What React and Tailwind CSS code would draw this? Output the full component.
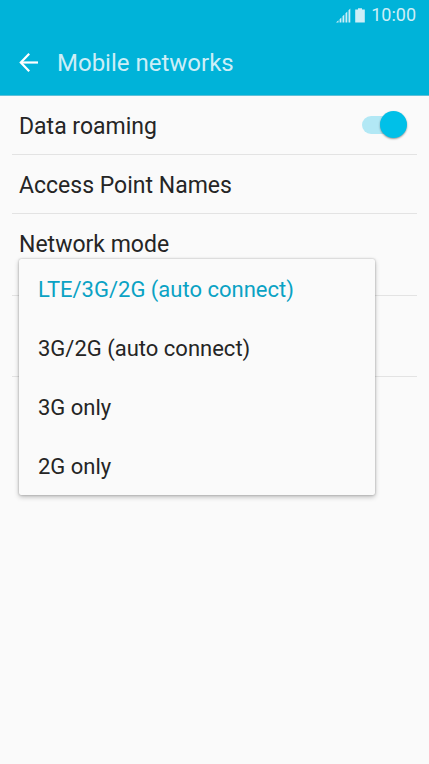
import React, { useState } from 'react';

const NETWORK_MODES = [
  'LTE/3G/2G (auto connect)',
  '3G/2G (auto connect)',
  '3G only',
  '2G only',
];

const SignalIcon = () => (
  <svg className="w-[15px] h-[15px]" viewBox="0 0 15 15" fill="currentColor" aria-hidden="true">
    <path d="M0 14.5 L2.5 12.3 V14.5 Z" />
    <path d="M3.6 11.2 L5.4 9.6 V14.5 H3.6 Z" />
    <path d="M6.5 8.2 L8.3 6.5 V14.5 H6.5 Z" />
    <path d="M9.5 5.2 L11.3 3.4 V14.5 H9.5 Z" />
    <path d="M12.5 2.2 L14.3 0.5 V14.5 H12.5 Z" />
  </svg>
);

const BatteryIcon = () => (
  <svg className="w-[10px] h-[15px]" viewBox="0 0 10 15" fill="currentColor" aria-hidden="true">
    <path d="M3 0.3 H7 V1.6 H9.8 V14.6 H0.2 V1.6 H3 Z" />
  </svg>
);

const BackIcon = () => (
  <svg
    className="w-5 h-5"
    viewBox="0 0 20 20"
    fill="none"
    stroke="currentColor"
    strokeWidth="2.2"
    aria-hidden="true"
  >
    <path d="M19 9.5 H2" />
    <path d="M10.2 0.8 L1.8 9.5 L10.2 18.2" />
  </svg>
);

const Switch = ({ id, checked, onChange }) => (
  <span className="relative flex items-center w-[46px] h-7">
    <input
      id={id}
      type="checkbox"
      role="switch"
      checked={checked}
      onChange={onChange}
      className="peer appearance-none w-9 h-[18px] rounded-full bg-gray-300 checked:bg-[#b2e8f5] cursor-pointer"
    />
    <span className="absolute left-0 top-0 w-[27px] h-[27px] rounded-full bg-white shadow-[0_1px_2px_rgba(0,0,0,0.4)] pointer-events-none peer-checked:left-[18px] peer-checked:bg-[#00c0e8]" />
  </span>
);

const App = () => {
  const [roaming, setRoaming] = useState(true);
  const [mode, setMode] = useState(NETWORK_MODES[0]);

  return (
    <div className="min-h-screen bg-[#fafafa] text-[#252525] font-['Roboto',sans-serif]">
      <header className="bg-[#00b3d9] border-b border-[#5fc0d8]">
        <div className="flex items-center justify-end h-[30px] pr-[13px] text-[#cdeef7]">
          <SignalIcon />
          <span className="ml-1 mr-[6px]">
            <BatteryIcon />
          </span>
          <span className="text-lg leading-5">10:00</span>
        </div>
        <div className="flex items-center h-[65px] pl-[19px] gap-[18px]">
          <button type="button" aria-label="Back" className="text-white">
            <BackIcon />
          </button>
          <h1 className="text-2xl pt-px text-[#cdeef7]">Mobile networks</h1>
        </div>
      </header>

      <main className="px-3">
        <div className="flex items-center justify-between h-[59px] pl-[7px] pr-[9px] border-b border-[#e3e3e3]">
          <label htmlFor="roaming" className="pt-1 text-[23px] leading-8">Data roaming</label>
          <Switch id="roaming" checked={roaming} onChange={() => setRoaming(!roaming)} />
        </div>

        <button
          type="button"
          className="flex items-center w-full h-[59px] pl-[7px] pt-1 text-[23px] leading-8 border-b border-[#e3e3e3]"
        >
          Access Point Names
        </button>

        <div className="relative h-[82px] pl-[7px] pt-[15px] border-b border-[#e3e3e3]">
          <h2 id="mode-label" className="text-[23px] leading-8">Network mode</h2>
          <div
            role="listbox"
            aria-labelledby="mode-label"
            className="absolute z-10 left-[7px] right-[42px] top-[45px] bg-[#fafafa] rounded-xs shadow-[0_0_2px_rgba(0,0,0,0.3),0_2px_5px_rgba(0,0,0,0.25)]"
          >
            {NETWORK_MODES.map((name) => (
              <button
                key={name}
                type="button"
                role="option"
                aria-selected={name === mode}
                onClick={() => setMode(name)}
                className="flex items-center w-full h-[59px] px-[19px] pt-0.5 text-[22px] leading-8 aria-selected:text-[#0aa2c4]"
              >
                {name}
              </button>
            ))}
          </div>
        </div>

        <div className="h-[81px] border-b border-[#e3e3e3]" />
      </main>
    </div>
  );
};

export default App;
